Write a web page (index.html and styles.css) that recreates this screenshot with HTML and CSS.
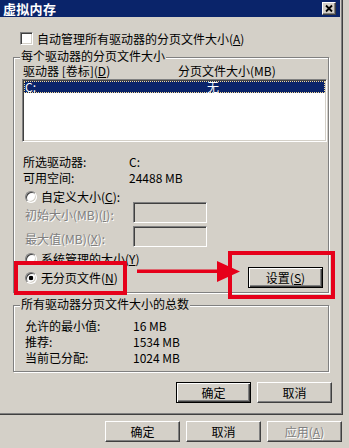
FILE: index.html
```html
<!DOCTYPE html>
<html lang="zh-CN">
<head>
<meta charset="utf-8">
<title>虚拟内存</title>
<link rel="stylesheet" href="styles.css">
</head>
<body>
<div class="dialog">
  <div class="titlebar">
    <span class="title">虚拟内存</span>
    <span class="close"><svg width="14" height="13" viewBox="0 0 14 13"><path d="M4 3.5 L10 9.5 M10 3.5 L4 9.5" stroke="#000" stroke-width="1.8" fill="none"/></svg></span>
  </div>
  <div class="content">
    <div class="check-row"><span class="checkbox"></span><span>自动管理所有驱动器的分页文件大小(<u>A</u>)</span></div>

    <div class="group group1">
      <div class="legend">每个驱动器的分页文件大小</div>
      <div class="colhead"><span class="c1">驱动器 [卷标](<u>D</u>)</span><span>分页文件大小(MB)</span></div>
      <div class="listbox">
        <div class="lrow sel"><span class="l1">C:</span><span>无</span></div>
      </div>
      <div class="info">
        <div class="irow"><span class="ilabel">所选驱动器:</span><span>C:</span></div>
        <div class="irow"><span class="ilabel">可用空间:</span><span>24488 MB</span></div>
      </div>
      <div class="radio-row r1"><span class="radio"></span><span>自定义大小(<u>C</u>):</span></div>
      <div class="field-row f1"><span class="flabel disabled">初始大小(MB)(<u>I</u>):</span><span class="field"></span></div>
      <div class="field-row f2"><span class="flabel disabled">最大值(MB)(<u>X</u>):</span><span class="field"></span></div>
      <div class="radio-row r2"><span class="radio"></span><span>系统管理的大小(<u>Y</u>)</span></div>
      <div class="action-row">
        <div class="radio-row r3"><span class="radio checked"></span><span>无分页文件(<u>N</u>)</span></div>
        <button class="btn default set">设置(<u>S</u>)</button>
        <span class="mark mark-radio"></span>
        <svg class="mark-arrow" width="103" height="22" viewBox="0 0 103 22"><rect x="0" y="8.5" width="82" height="3.5" fill="#e6001a"/><polygon points="80,0 103,10.5 80,21" fill="#e6001a"/></svg>
        <span class="mark mark-btn"></span>
      </div>
    </div>

    <div class="group group2">
      <div class="legend">所有驱动器分页文件大小的总数</div>
      <div class="totals">
        <div class="irow"><span class="tlabel">允许的最小值:</span><span>16 MB</span></div>
        <div class="irow"><span class="tlabel">推荐:</span><span>1534 MB</span></div>
        <div class="irow"><span class="tlabel">当前已分配:</span><span>1024 MB</span></div>
      </div>
    </div>

    <div class="button-row">
      <button class="btn default">确定</button>
      <button class="btn">取消</button>
    </div>
  </div>
</div>
<div class="parent-buttons">
  <button class="btn">确定</button>
  <button class="btn">取消</button>
  <button class="btn btn-disabled">应用(<u>A</u>)</button>
</div>
</body>
</html>
```
FILE: styles.css
```css
html, body {
  margin: 0;
  padding: 0;
}
body {
  width: 349px;
  height: 448px;
  overflow: hidden;
  background: #d4d0c8;
  color: #000;
  font-family: "Noto Sans CJK SC", "Noto Sans", sans-serif;
  font-size: 12px;
  line-height: 12px;
}
u {
  text-decoration: underline;
  text-underline-offset: 1px;
}
.dialog {
  width: 343px;
  height: 415px;
  box-sizing: border-box;
  padding: 0 3px 3px 0;
  box-shadow: inset -1px -1px #404040, inset -2px -2px #808080;
}
.titlebar {
  height: 17px;
  background: #0a246a;
  display: flex;
  align-items: center;
  justify-content: space-between;
  padding: 0 4px 0 3px;
}
.title {
  color: #fff;
  font-weight: bold;
  font-size: 13px;
  line-height: 17px;
  letter-spacing: 0.3px;
}
.close {
  width: 14px;
  height: 13px;
  box-sizing: border-box;
  background: #d4d0c8;
  border: 1px solid;
  border-color: #fff #404040 #404040 #fff;
  box-shadow: inset -1px -1px #808080;
  display: flex;
  align-items: center;
  justify-content: center;
}
.close svg {
  display: block;
  flex: none;
}
.content {
  height: 395px;
  box-sizing: border-box;
  padding-top: 15px;
  display: flow-root;
}
.check-row {
  display: flex;
  align-items: center;
  height: 13px;
  margin-left: 20px;
  line-height: 13px;
}
.checkbox {
  width: 13px;
  height: 13px;
  box-sizing: border-box;
  background: #fff;
  border: 1px solid;
  border-color: #808080 #fff #fff #808080;
  box-shadow: inset 1px 1px #404040, inset -1px -1px #d4d0c8;
  margin-right: 4px;
  flex: none;
}
.group {
  width: 316px;
  box-sizing: border-box;
  border: 1px solid #808080;
  box-shadow: inset 1px 1px #fff, 1px 1px #fff;
  margin-left: 13px;
}
.group1 {
  margin-top: 12px;
  padding-bottom: 4px;
}
.group2 {
  margin-top: 12px;
  padding-bottom: 5px;
}
.legend {
  width: fit-content;
  margin: -8px 0 0 6px;
  padding: 0 1px;
  background: #d4d0c8;
  line-height: 12px;
}
.colhead {
  display: flex;
  margin-top: 3px;
  padding-left: 9px;
}
.colhead .c1 {
  width: 155px;
}
.listbox {
  margin: 2px 0 0 8px;
  width: 305px;
  height: 63px;
  box-sizing: border-box;
  background: #fff;
  border: 1px solid;
  border-color: #808080 #fff #fff #808080;
  box-shadow: inset 1px 1px #404040, inset -1px -1px #d4d0c8;
  padding: 1px;
}
.lrow {
  display: flex;
  height: 12px;
  box-sizing: border-box;
  line-height: 10px;
  color: #fff;
}
.lrow.sel {
  background: #0a246a;
  border: 1px dotted #f5db95;
}
.lrow .l1 {
  width: 182px;
}
.info {
  margin-top: 12px;
  padding-left: 9px;
}
.irow {
  display: flex;
  line-height: 16px;
  height: 16px;
}
.ilabel {
  width: 106px;
}
.radio-row {
  display: flex;
  align-items: center;
  height: 12px;
  padding-left: 11px;
}
.r1 {
  margin-top: 5px;
}
.r2 {
  margin-top: 6px;
}
.radio {
  width: 12px;
  height: 12px;
  box-sizing: border-box;
  border-radius: 50%;
  background: #fff;
  border: 1px solid;
  border-color: #808080 #fff #fff #808080;
  box-shadow: inset 1px 1px #404040, inset -1px -1px #d4d0c8;
  margin-right: 4px;
  flex: none;
}
.radio.checked {
  background: radial-gradient(circle, #000 0 2px, #fff 2.6px);
}
.field-row {
  display: flex;
  align-items: flex-end;
  padding-left: 11px;
}
.f1 {
  margin-top: -1px;
}
.f2 {
  margin-top: 3px;
}
.flabel {
  width: 108px;
  margin-bottom: 2px;
}
.disabled {
  color: #808080;
  text-shadow: 1px 1px #fff;
}
.field {
  width: 74px;
  height: 21px;
  box-sizing: border-box;
  background: #d4d0c8;
  border: 1px solid;
  border-color: #808080 #fff #fff #808080;
  box-shadow: inset 1px 1px #404040, inset -1px -1px #d4d0c8;
}
.action-row {
  position: relative;
  display: flex;
  align-items: center;
  height: 21px;
  margin-top: 2px;
  padding: 0 5px 0 0;
}
.action-row .r3 {
  padding-left: 11px;
}
.btn {
  width: 75px;
  height: 21px;
  box-sizing: border-box;
  margin: 0;
  padding: 0;
  background: #d4d0c8;
  border: 1px solid;
  border-color: #fff #404040 #404040 #fff;
  box-shadow: inset -1px -1px #808080;
  font-family: "Noto Sans CJK SC", "Noto Sans", sans-serif;
  font-size: 12px;
  line-height: 12px;
  color: #000;
  display: flex;
  align-items: center;
  justify-content: center;
}
.btn.default {
  border: 1px solid #000;
  box-shadow: inset 1px 1px #fff, inset -1px -1px #404040, inset -2px -2px #808080;
}
.btn.btn-disabled {
  color: #808080;
  text-shadow: 1px 1px #fff;
}
.set {
  margin-left: auto;
}
.mark {
  position: absolute;
  box-sizing: border-box;
  border: 4px solid #e6001a;
}
.mark-radio {
  left: 0;
  top: -6px;
  width: 113px;
  height: 34px;
}
.mark-btn {
  left: 214px;
  top: -16px;
  width: 107px;
  height: 48px;
}
.mark-arrow {
  position: absolute;
  left: 123px;
  top: -6px;
}
.totals {
  margin-top: 8px;
  padding-left: 11px;
}
.tlabel {
  width: 108px;
}
.button-row {
  display: flex;
  justify-content: flex-end;
  gap: 6px;
  margin-top: 10px;
  padding-right: 8px;
}
.parent-buttons {
  display: flex;
  justify-content: flex-end;
  gap: 6px;
  margin-top: 6px;
  padding-right: 7px;
}
```
